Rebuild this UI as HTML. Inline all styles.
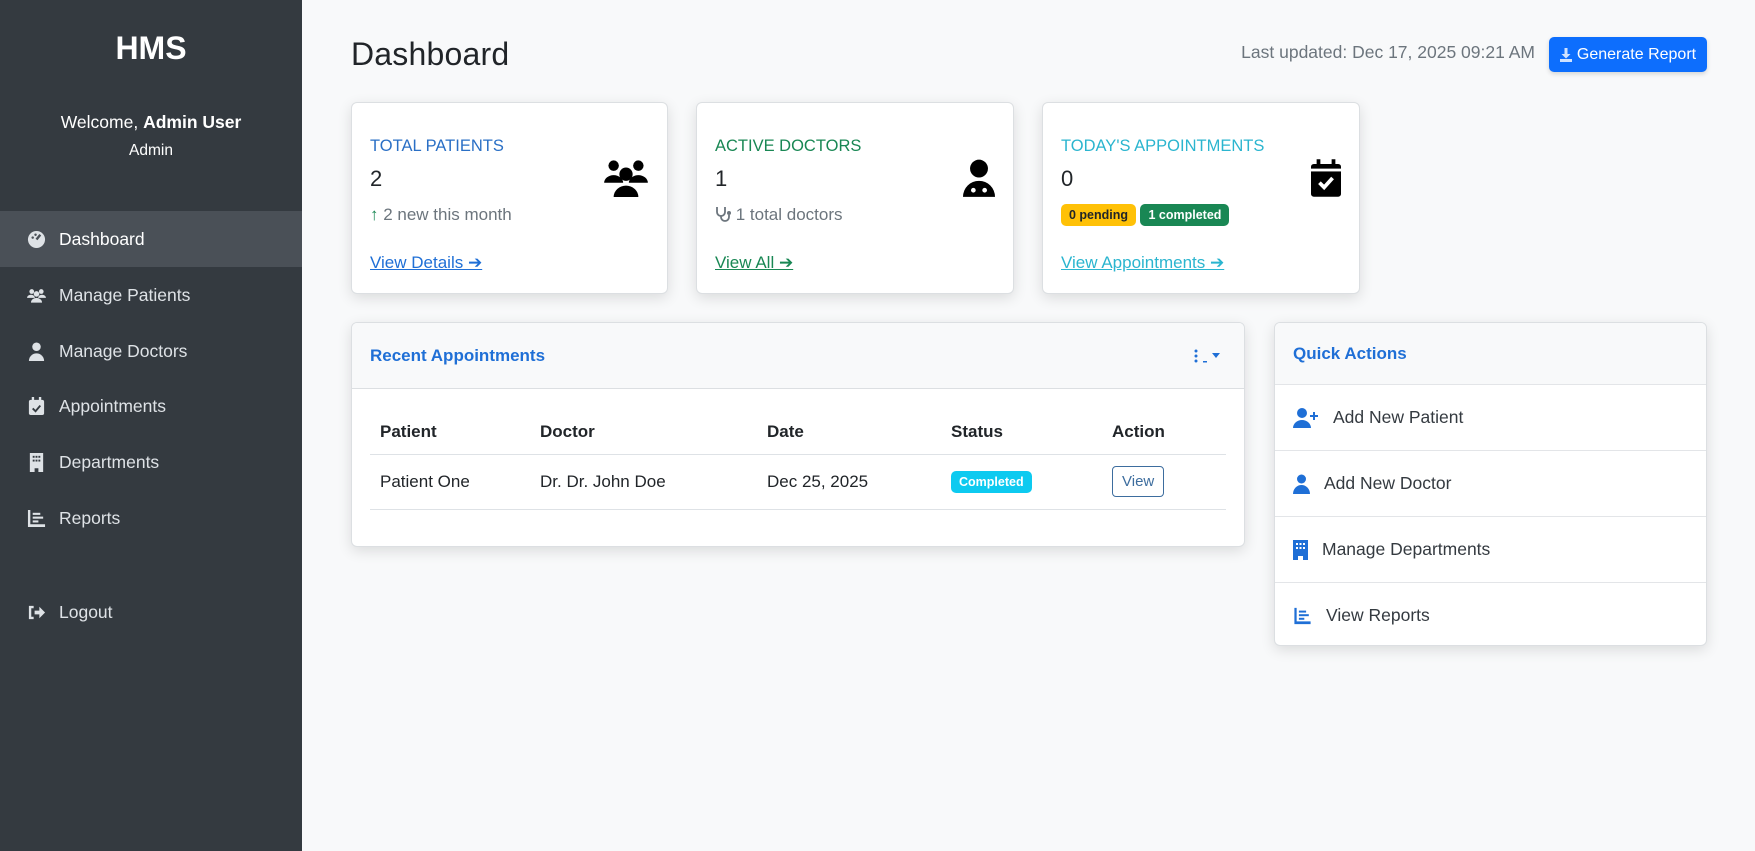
<!DOCTYPE html>
<html><head><meta charset="utf-8"><style>
*{box-sizing:border-box;margin:0;padding:0}
body{width:1755px;height:851px;background:#f8f9fa;font-family:"Liberation Sans",sans-serif;color:#212529;position:relative;overflow:hidden}
.abs{position:absolute}
.sb{left:0;top:0;width:302px;height:851px;background:#343a40;color:#fff}
.nav{position:absolute;left:0;width:302px;height:56px;display:flex;align-items:center;padding-left:27px;font-size:17.5px;color:#dee2e6}
.nav svg{width:19px;height:19px;margin-right:13px;fill:#dee2e6}
.nav.act{background:#4a5057;color:#fff}
.card{position:absolute;background:#fff;border:1px solid #dcdfe2;border-radius:6px;box-shadow:0 4px 14px rgba(0,0,0,.12)}
.lbl{position:absolute;left:18px;top:34px;font-size:16.5px}
.num{position:absolute;left:18px;top:63px;font-size:22px}
.sub{position:absolute;left:18px;top:102px;font-size:17px;color:#6c757d}
.lnk{position:absolute;left:18px;top:150px;font-size:17px;text-decoration:underline}
.ic{position:absolute;right:18px;top:56px}
.badge{display:inline-block;font-size:12.5px;font-weight:bold;padding:4px 8px;border-radius:5px}
th{font-weight:bold;text-align:left;font-size:17px}
.qa{position:absolute;left:0;width:432px;height:66px;border-top:1px solid #e3e5e8;display:flex;align-items:center;padding-left:18px;font-size:17.5px;color:#343a40}
.qa svg{fill:#1f6fd6;margin-right:14px}
</style></head><body>
<div class="abs sb">
 <div class="abs" style="left:0;width:302px;top:30px;text-align:center;font-size:32px;font-weight:bold">HMS</div>
 <div class="abs" style="left:0;width:302px;top:112px;text-align:center;font-size:17.5px">Welcome, <b>Admin User</b></div>
 <div class="abs" style="left:0;width:302px;top:142px;text-align:center;font-size:15.5px">Admin</div>
 <div class="nav act" style="top:211px"><svg viewBox="0 0 20 20"><circle cx="10" cy="10" r="9"/><path d="M10 10 L14 5" stroke="#4a5057" stroke-width="2.5"/><circle cx="6" cy="8" r="1.3" fill="#4a5057"/><circle cx="9" cy="5" r="1.3" fill="#4a5057"/></svg>Dashboard</div>
 <div class="nav" style="top:267px"><svg viewBox="0 0 24 20"><circle cx="6" cy="5" r="3"/><circle cx="18" cy="5" r="3"/><circle cx="12" cy="8" r="3.5"/><path d="M0 13a5 4 0 0 1 10 0zM14 13a5 4 0 0 1 10 0zM5 19a7 6 0 0 1 14 0z"/></svg>Manage Patients</div>
 <div class="nav" style="top:323px"><svg viewBox="0 0 20 20"><circle cx="10" cy="5" r="4.5"/><path d="M2 20a8 8 0 0 1 16 0z"/></svg>Manage Doctors</div>
 <div class="nav" style="top:378px"><svg viewBox="0 0 20 20"><rect x="2" y="3" width="16" height="16" rx="2"/><rect x="5" y="0" width="2.5" height="5"/><rect x="12.5" y="0" width="2.5" height="5"/><path d="M6 12l3 3 5-6" stroke="#343a40" stroke-width="2" fill="none"/></svg>Appointments</div>
 <div class="nav" style="top:434px"><svg viewBox="0 0 20 20"><path d="M3 0h14v20h-5v-4h-4v4H3z"/><g fill="#343a40"><rect x="6" y="3" width="2" height="2"/><rect x="9" y="3" width="2" height="2"/><rect x="12" y="3" width="2" height="2"/><rect x="6" y="7" width="2" height="2"/><rect x="9" y="7" width="2" height="2"/><rect x="12" y="7" width="2" height="2"/></g></svg>Departments</div>
 <div class="nav" style="top:490px"><svg viewBox="0 0 20 20"><path d="M1 1h2.5v15H19v3H1z"/><rect x="6" y="4" width="8" height="2.2"/><rect x="6" y="8" width="11" height="2.2"/><rect x="6" y="12" width="6" height="2.2"/></svg>Reports</div>
 <div class="nav" style="top:584px"><svg viewBox="0 0 20 20"><path d="M2 3h5v2.5H4.5v9H7V17H2z"/><path d="M8 8h5V4l6 6-6 6v-4H8z"/></svg>Logout</div>
</div>

<div class="abs" style="left:351px;top:36px;font-size:32px;font-weight:500;letter-spacing:0.2px">Dashboard</div>
<div class="abs" style="right:220px;top:42px;font-size:17.5px;color:#6c757d">Last updated: Dec 17, 2025 09:21 AM</div>
<div class="abs" style="left:1549px;top:37px;width:158px;height:35px;background:#0d6efd;border-radius:5px;color:#fff;font-size:16px;display:flex;align-items:center;justify-content:center;box-shadow:0 2px 5px rgba(0,0,0,.15)"><svg width="12" height="14" viewBox="0 0 12 14" style="margin-right:5px"><path d="M4.5 0h3v6h3L6 10.5 1.5 6h3z" fill="#cfe2ff"/><rect x="0" y="11" width="12" height="3" fill="#cfe2ff"/></svg>Generate Report</div>

<div class="card" style="left:351px;top:102px;width:317px;height:192px">
 <div class="lbl" style="color:#2a6fc5">TOTAL PATIENTS</div>
 <div class="num">2</div>
 <div class="sub"><span style="color:#198754">&#8593;</span> 2 new this month</div>
 <div class="lnk" style="color:#1f6fd6">View Details &#10132;</div>
 <svg class="ic" width="46" height="38" viewBox="0 0 48 40"><circle cx="11" cy="7" r="5.5"/><circle cx="37" cy="7" r="5.5"/><circle cx="24" cy="16" r="7"/><path d="M1 25a10 8 0 0 1 20 0zM27 25a10 8 0 0 1 20 0zM11 40a13 12 0 0 1 26 0z"/></svg>
</div>
<div class="card" style="left:696px;top:102px;width:318px;height:192px">
 <div class="lbl" style="color:#198754">ACTIVE DOCTORS</div>
 <div class="num">1</div>
 <div class="sub"><svg width="16" height="16" viewBox="0 0 16 16" style="vertical-align:-2px"><path d="M2 1v5a4 4 0 0 0 8 0V1M6 10v1a4 4 0 0 0 8 0V9" stroke="#6c757d" stroke-width="1.8" fill="none"/><circle cx="14" cy="7" r="2" fill="#6c757d"/></svg> 1 total doctors</div>
 <div class="lnk" style="color:#198754">View All &#10132;</div>
 <svg class="ic" width="32" height="38" viewBox="0 0 34 40"><circle cx="17" cy="10" r="9.5"/><path d="M0 40a17 17 0 0 1 34 0z"/><circle cx="11" cy="33" r="2.5" fill="#fff"/><circle cx="23" cy="33" r="2.5" fill="#fff"/></svg>
</div>
<div class="card" style="left:1042px;top:102px;width:318px;height:192px">
 <div class="lbl" style="color:#2bb5cf">TODAY'S APPOINTMENTS</div>
 <div class="num">0</div>
 <div style="position:absolute;left:18px;top:101px"><span class="badge" style="background:#ffc107;color:#212529">0 pending</span> <span class="badge" style="background:#198754;color:#fff">1 completed</span></div>
 <div class="lnk" style="color:#2bb5cf">View Appointments &#10132;</div>
 <svg class="ic" width="30" height="38" viewBox="0 0 32 40"><rect x="0" y="5" width="32" height="35" rx="3"/><rect x="6" y="0" width="4" height="8"/><rect x="22" y="0" width="4" height="8"/><rect x="0" y="10" width="32" height="3" fill="#fff"/><path d="M9 25l5 5 9-10" stroke="#fff" stroke-width="4" fill="none"/></svg>
</div>

<div class="card" style="left:351px;top:322px;width:894px;height:225px;overflow:hidden">
 <div style="height:66px;background:#f8f9fa;border-bottom:1px solid #dcdfe2;padding:23px 18px;font-size:17px;font-weight:bold;color:#1f6fd6;position:relative">Recent Appointments<svg style="position:absolute;right:24px;top:26px" width="26" height="14" viewBox="0 0 26 14"><g fill="#1f6fd6"><circle cx="2" cy="2" r="1.5"/><circle cx="2" cy="7" r="1.5"/><circle cx="2" cy="12" r="1.5"/><rect x="9" y="12" width="4" height="1.5"/><path d="M18 4h8l-4 5z"/></g></svg></div>
 <table style="position:absolute;left:18px;top:88px;width:856px;border-collapse:collapse">
  <tr style="height:43px;border-bottom:1px solid #dee2e6"><th style="padding-left:10px;width:170px">Patient</th><th style="width:227px">Doctor</th><th style="width:184px">Date</th><th style="width:161px">Status</th><th>Action</th></tr>
  <tr style="height:55px;border-bottom:1px solid #dee2e6;font-size:17px"><td style="padding-left:10px">Patient One</td><td>Dr. Dr. John Doe</td><td>Dec 25, 2025</td><td><span class="badge" style="background:#0dcaf0;color:#fff">Completed</span></td><td><span style="display:inline-block;border:1px solid #3d6d9e;border-radius:4px;padding:6px 9px;font-size:15px;color:#3d6d9e">View</span></td></tr>
 </table>
</div>

<div class="card" style="left:1274px;top:322px;width:433px;height:324px;overflow:hidden">
 <div style="height:61px;background:#f8f9fa;padding:21px 18px;font-size:17px;font-weight:bold;color:#1f6fd6">Quick Actions</div>
 <div class="qa" style="top:61px"><svg width="26" height="20" viewBox="0 0 26 20"><circle cx="9" cy="5" r="5"/><path d="M0 20a9 8 0 0 1 18 0z"/><path d="M21 4v8M17 8h8" stroke="#1f6fd6" stroke-width="2"/></svg>Add New Patient</div>
 <div class="qa" style="top:127px"><svg width="17" height="20" viewBox="0 0 17 20"><circle cx="8.5" cy="5" r="4.5"/><path d="M0 20a8.5 9 0 0 1 17 0z"/></svg>Add New Doctor</div>
 <div class="qa" style="top:193px"><svg width="15" height="20" viewBox="0 0 15 20"><path d="M0 0h15v20h-5v-4H5v4H0z"/><g fill="#fff"><rect x="3" y="3" width="2" height="2"/><rect x="6.5" y="3" width="2" height="2"/><rect x="10" y="3" width="2" height="2"/><rect x="3" y="7" width="2" height="2"/><rect x="6.5" y="7" width="2" height="2"/><rect x="10" y="7" width="2" height="2"/></g></svg>Manage Departments</div>
 <div class="qa" style="top:259px"><svg width="19" height="18" viewBox="0 0 20 20"><path d="M1 1h2.5v15H19v3H1z"/><rect x="6" y="4" width="8" height="2.2"/><rect x="6" y="8" width="11" height="2.2"/><rect x="6" y="12" width="6" height="2.2"/></svg>View Reports</div>
</div>
</body></html>
